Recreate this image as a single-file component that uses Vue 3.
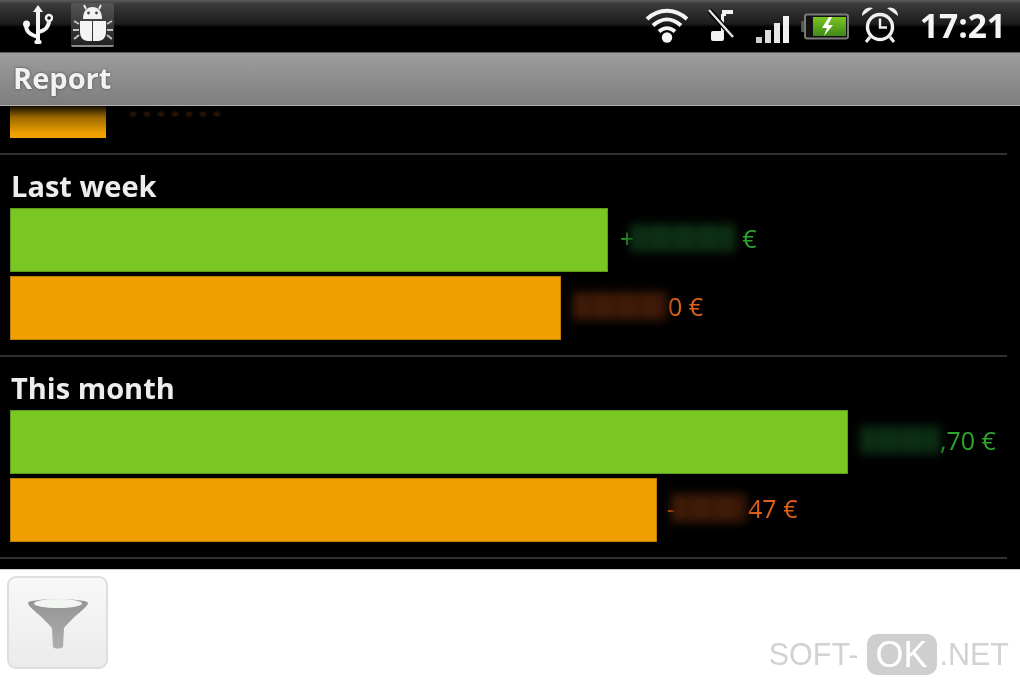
<script setup>
const sections = [
  {
    title: 'Last week',
    rows: [
      { kind: 'gain', width: 598, before: '+', blur: 105, after: '€', afterGap: 7, lead: 12 },
      { kind: 'loss', width: 551, before: '', blur: 94, after: '0 €', afterGap: 1, lead: 12 },
    ],
  },
  {
    title: 'This month',
    rows: [
      { kind: 'gain', width: 838, before: '', blur: 80, after: ',70 €', afterGap: 0, lead: 12 },
      { kind: 'loss', width: 647, before: '-', blur: 75, after: '47 €', afterGap: 2, lead: 10 },
    ],
  },
]
</script>

<template>
  <div class="screen">
    <header class="status">
      <div class="status-left">
        <svg class="usb" viewBox="0 0 30 40" width="30" height="40">
          <path d="M15 4V37M15 32C9 30 3 28 3 20M15 27C20 26 26 24 26 15" fill="none" stroke="#f4f4f4" stroke-width="4" stroke-linejoin="round" />
          <path d="M15 0l5 7H10z" fill="#f4f4f4" />
          <circle cx="3.500" cy="19" r="3.500" fill="#f4f4f4" />
          <circle cx="26" cy="13" r="3" fill="#111" stroke="#f4f4f4" stroke-width="2.400" />
          <rect x="11.500" y="35" width="7" height="4" rx="1.500" fill="#f4f4f4" />
        </svg>
        <div class="bug-box">
          <svg viewBox="0 0 43 42" width="43" height="42">
            <path d="M12 16C12 8 16 4 21.500 4C27 4 31 8 31 16Z" fill="#f2f2f2" />
            <path d="M15 6l-2-4M28 6l2-4" stroke="#f2f2f2" stroke-width="1.800" />
            <circle cx="17.500" cy="10" r="1.400" fill="#444" />
            <circle cx="25.500" cy="10" r="1.400" fill="#444" />
            <path d="M9 18H21V38H17C12 38 9 34 9 29ZM22 18H35V29C35 34 32 38 27 38H22Z" fill="#f4f4f4" />
            <path d="M8 21 3 18M8 27H2M8 32 3 36M36 21l5-3M36 27h6M36 32l5 4" stroke="#c4c4c4" stroke-width="2" fill="none" />
          </svg>
        </div>
      </div>
      <div class="status-right">
        <svg class="wifi" viewBox="0 0 44 36" width="44" height="36">
          <path d="M2 12C14 1 30 1 42 12M8 18.500C17 10.500 27 10.500 36 18.500M14 24.500C19 20 25 20 30 24.500" fill="none" stroke="#f4f4f4" stroke-width="4" />
          <circle cx="22" cy="30.500" r="5.200" fill="#f4f4f4" />
        </svg>
        <svg class="mute" viewBox="0 0 26 34" width="26" height="34">
          <path d="M14 8V2H25V6H18V8Z" fill="#f2f2f2" />
          <rect x="3" y="23" width="13" height="10" rx="2" fill="#f2f2f2" />
          <path d="M14.500 6V24" stroke="#f2f2f2" stroke-width="3" />
          <path d="M1 2 25 29" stroke="#000" stroke-width="5" />
          <path d="M1 2 25 29" stroke="#e6e6e6" stroke-width="2.400" />
        </svg>
        <svg class="signal" viewBox="0 0 33 27" width="33" height="27">
          <rect x="0" y="21" width="6" height="6" fill="#cfcfcf" />
          <rect x="9" y="14" width="6" height="13" fill="#dcdcdc" />
          <rect x="18" y="7" width="6" height="20" fill="#e8e8e8" />
          <rect x="27" y="0" width="6" height="27" fill="#f2f2f2" />
        </svg>
        <svg class="battery" viewBox="0 0 48 27" width="48" height="27">
          <defs>
            <linearGradient id="charge" x1="0" y1="0" x2="0" y2="1">
              <stop offset="0" stop-color="#7cc522" />
              <stop offset="1" stop-color="#3f8a18" />
            </linearGradient>
          </defs>
          <rect x="0" y="8" width="4" height="11" rx="1" fill="#555" />
          <rect x="4" y="1.500" width="43" height="24" rx="2" fill="#111" stroke="#7a7a7a" stroke-width="2" />
          <rect x="12" y="4" width="33" height="19" fill="url(#charge)" />
          <path d="M28 4 21 15h5l-3 8 9-11h-5l4-8z" fill="#fff" />
        </svg>
        <svg class="alarm" viewBox="0 0 38 38" width="38" height="38">
          <circle cx="19" cy="21" r="12.500" fill="none" stroke="#f0f0f0" stroke-width="3.400" />
          <path d="M19 12.500v9h7" fill="none" stroke="#f0f0f0" stroke-width="2.400" />
          <path d="M1 10C1 4 6 0 12 2zM37 10c0-6-5-10-11-8z" fill="#f0f0f0" />
          <path d="M9 31 5 36M29 31l4 5" stroke="#f0f0f0" stroke-width="3" />
        </svg>
        <span class="clock">17:21</span>
      </div>
    </header>

    <div class="titlebar">Report</div>

    <main class="list">
      <div class="partial">
        <div class="partial-bar"></div>
        <div class="partial-amount"></div>
      </div>
      <section v-for="s in sections" :key="s.title" class="section">
        <h2 class="section-title">{{ s.title }}</h2>
        <div class="rows">
          <div v-for="(r, i) in s.rows" :key="i" class="row">
            <div class="bar" :class="r.kind + '-bar'" :style="{ width: r.width + 'px' }"></div>
            <div class="amount" :class="r.kind" :style="{ marginLeft: r.lead + 'px' }">
              <span v-if="r.before" class="sign">{{ r.before }}</span>
              <span class="smudge" :style="{ width: r.blur + 'px' }"></span>
              <span :style="{ marginLeft: r.afterGap + 'px' }">{{ r.after }}</span>
            </div>
          </div>
        </div>
      </section>
    </main>

    <footer class="footer">
      <button class="filter" type="button" aria-label="Filter">
        <svg viewBox="0 0 62 56" width="62" height="56">
          <defs>
            <linearGradient id="funnel" x1="0" y1="0" x2="0" y2="1">
              <stop offset="0" stop-color="#949494" />
              <stop offset="1" stop-color="#aeaeae" />
            </linearGradient>
          </defs>
          <path d="M1 8C1 3 61 3 61 8C61 12 50 18 37 33L36 52C34 54 28 54 26 52L25 33C12 18 1 12 1 8Z" fill="url(#funnel)" />
          <ellipse cx="31" cy="8.500" rx="24" ry="4.500" fill="#f3f5f3" />
        </svg>
      </button>
      <div class="mark">
        <span>SOFT-</span>
        <span class="mark-ok">OK</span>
        <span>.NET</span>
      </div>
    </footer>
  </div>
</template>

<style scoped>
.screen {
  width: 1020px;
  height: 680px;
  display: flex;
  flex-direction: column;
  overflow: hidden;
  background: #000;
  font-family: "Open Sans", "Noto Sans", sans-serif;
  filter: blur(0.6px);
}
.status {
  height: 52px;
  flex: none;
  display: flex;
  justify-content: space-between;
  align-items: center;
  padding: 0 14px 2px 23px;
  box-sizing: border-box;
  background: linear-gradient(#5c5c5c 0, #3a3a3a 4px, #1c1c1c 24px, #000 27px);
}
.status-left,
.status-right {
  display: flex;
  align-items: center;
}
.bug-box {
  width: 43px;
  height: 44px;
  margin-left: 18px;
  box-sizing: border-box;
  background: linear-gradient(#555, #222);
  border-bottom: 2px solid #8a8a8a;
  border-radius: 2px;
}
.wifi { margin-right: 19px; }
.mute { margin-right: 22px; }
.signal { margin: 8px 12px 0 0; }
.battery { margin: 2px 12px 0 0; }
.alarm { margin: 0 21px 0 0; }
.clock {
  color: #f4f4f4;
  font-size: 33.500px;
  font-weight: 700;
  line-height: 40px;
}
.titlebar {
  height: 54px;
  flex: none;
  box-sizing: border-box;
  padding: 7px 0 0 13px;
  background: linear-gradient(#9d9d9d, #7e7e7e);
  border-top: 1px solid #5a5a5a;
  border-bottom: 1px solid #b0b0b0;
  color: #f2f2f2;
  font-size: 29px;
  font-weight: 700;
  line-height: 36px;
  text-shadow: 0 0 3px #444;
}
.list {
  height: 463px;
  flex: none;
  overflow: hidden;
  padding: 0 13px 0 0;
  box-sizing: border-box;
  background: #000;
}
.partial {
  display: flex;
  align-items: flex-start;
  height: 47px;
  padding-left: 10px;
  box-sizing: border-box;
}
.partial-bar {
  width: 96px;
  height: 32px;
  background: linear-gradient(#140d00 0, #9a6800 35%, #f0a000 85%);
}
.partial-amount {
  width: 96px;
  height: 4px;
  margin: 6px 0 0 24px;
  background: repeating-linear-gradient(90deg, #301705 0 6px, #000 6px 14px);
  filter: blur(1px);
}
.section {
  border-top: 2px solid #303030;
  padding: 14px 0 15px 10px;
}
.section:last-child {
  border-bottom: 2px solid #303030;
}
.section-title {
  margin: 0 0 5px 1px;
  color: #ededed;
  font-size: 29px;
  font-weight: 700;
  line-height: 34px;
}
.rows {
  display: flex;
  flex-direction: column;
  gap: 4px;
}
.row {
  display: flex;
  align-items: center;
  height: 64px;
}
.bar {
  box-sizing: border-box;
  height: 64px;
  flex: none;
}
.gain-bar {
  background: #7ac723;
  border: 1px solid #5f9a1c;
}
.loss-bar {
  background: #f09f00;
  border: 1px solid #c07f00;
}
.amount {
  display: flex;
  align-items: center;
  font-size: 25px;
  line-height: 32px;
  margin-top: -5px;
}
.gain { color: #2ea52e; }
.loss { color: #e0621a; }
.sign { margin-right: -4px; }
.smudge {
  height: 28px;
  filter: blur(5px);
}
.gain .smudge {
  background: repeating-linear-gradient(90deg, #0d3015 0 12px, #0b2a12 12px 24px);
}
.loss .smudge {
  background: repeating-linear-gradient(90deg, #421b08 0 12px, #3a1807 12px 24px);
}
.footer {
  flex: 1;
  display: flex;
  justify-content: space-between;
  align-items: flex-start;
  padding: 6px 11px 0 7px;
  background: #fff;
  border-top: 1px solid #d0d0d0;
  box-sizing: border-box;
}
.filter {
  width: 101px;
  height: 93px;
  padding: 0;
  display: flex;
  align-items: center;
  justify-content: center;
  background: linear-gradient(#f8f8f8, #ebebeb);
  border: 2px solid #dedede;
  border-radius: 9px;
}
.mark {
  display: flex;
  align-items: center;
  margin-top: 58px;
  color: #d2d2d2;
  font-family: "Liberation Sans", Arial, sans-serif;
  font-size: 30.500px;
  line-height: 41px;
}
.mark-ok {
  width: 70px;
  margin: 0 3px 0 8px;
  text-align: center;
  background: #cfcfcf;
  color: #fff;
  border-radius: 10px;
  font-size: 36px;
}
</style>
